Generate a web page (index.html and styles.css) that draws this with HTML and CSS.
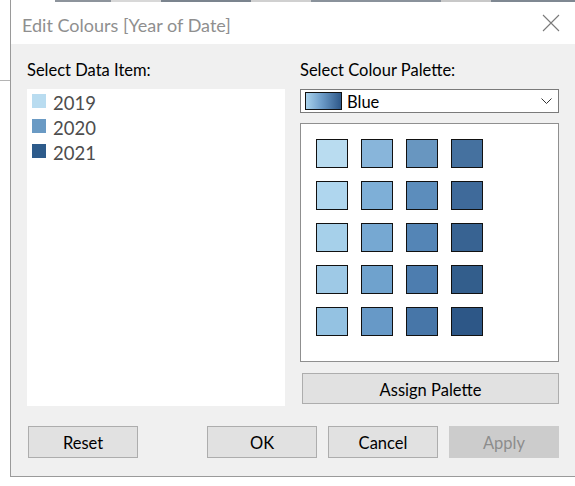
FILE: index.html
```html
<!DOCTYPE html>
<html>
<head>
<meta charset="utf-8">
<link rel="stylesheet" href="styles.css">
</head>
<body>
<div class="page">
  <div class="backdrop-left"><div class="backdrop-line"></div></div>
  <div class="dialog">
    <div class="titlebar">
      <div class="top-strip"></div>
      <div class="title-row">
        <span class="title">Edit Colours [Year of Date]</span>
        <svg class="close" width="18" height="18" viewBox="0 0 18 18">
          <path d="M1 1 L17 17 M17 1 L1 17" stroke="#7a7a7a" stroke-width="1.1" fill="none"/>
        </svg>
      </div>
    </div>
    <div class="content">
      <div class="columns">
        <div class="label">Select Data Item:</div>
        <div class="label">Select Colour Palette:</div>
        <div class="listbox">
          <div class="item"><span class="chip c2019"></span><span class="year">2019</span></div>
          <div class="item"><span class="chip c2020"></span><span class="year">2020</span></div>
          <div class="item"><span class="chip c2021"></span><span class="year">2021</span></div>
        </div>
        <div class="right">
          <div class="dropdown">
            <span class="gradient"></span>
            <span class="dd-text">Blue</span>
            <svg class="chev" width="11" height="6" viewBox="0 0 11 6">
              <path d="M0.5 0.5 L5.5 5.5 L10.5 0.5" stroke="#333" stroke-width="1" fill="none"/>
            </svg>
          </div>
          <div class="palette">
            <div class="grid">
              <span class="sw" style="background:#b9dcf0"></span>
              <span class="sw" style="background:#88b5da"></span>
              <span class="sw" style="background:#6896c0"></span>
              <span class="sw" style="background:#45719f"></span>
              <span class="sw" style="background:#afd6ee"></span>
              <span class="sw" style="background:#7eafd7"></span>
              <span class="sw" style="background:#5c8dbc"></span>
              <span class="sw" style="background:#3f6a9a"></span>
              <span class="sw" style="background:#a6d0ea"></span>
              <span class="sw" style="background:#76a8d2"></span>
              <span class="sw" style="background:#5485b6"></span>
              <span class="sw" style="background:#386392"></span>
              <span class="sw" style="background:#9ec9e6"></span>
              <span class="sw" style="background:#6fa2cd"></span>
              <span class="sw" style="background:#4d7daf"></span>
              <span class="sw" style="background:#335e8c"></span>
              <span class="sw" style="background:#94c2e2"></span>
              <span class="sw" style="background:#6799c7"></span>
              <span class="sw" style="background:#4776a8"></span>
              <span class="sw" style="background:#2d5787"></span>
            </div>
          </div>
          <div class="btn assign">Assign Palette</div>
        </div>
      </div>
      <div class="footer">
        <div class="btn reset">Reset</div>
        <div class="btn-group">
          <div class="btn">OK</div>
          <div class="btn">Cancel</div>
          <div class="btn disabled">Apply</div>
        </div>
      </div>
    </div>
  </div>
</div>
</body>
</html>
```
FILE: styles.css
```css
html, body {
  margin: 0;
  padding: 0;
  background: #ffffff;
}
body {
  font-family: Lato, "Liberation Sans", sans-serif;
  width: 575px;
  height: 486px;
  overflow: hidden;
}
.page {
  display: flex;
  align-items: flex-start;
}
.backdrop-left {
  width: 10px;
  flex: none;
}
.backdrop-line {
  margin-top: 80px;
  height: 1px;
  background: #b4b4b4;
}
.dialog {
  width: 564px;
  border-left: 1px solid #9a9a9a;
  border-bottom: 1px solid #9a9a9a;
  display: flex;
  flex-direction: column;
}
.titlebar {
  background: #ffffff;
  height: 44px;
}
.top-strip {
  height: 2px;
  background: linear-gradient(to right,
    #ffffff 0, #ffffff 44px,
    #8d949c 44px, #8d949c 100px,
    #d8d8d8 100px, #d8d8d8 150px,
    #7b848e 150px, #7b848e 240px,
    #d0d0d0 240px, #d0d0d0 300px,
    #8a929b 300px, #8a929b 430px,
    #c8c8c8 430px, #c8c8c8 480px,
    #7f8892 480px, #7f8892 564px);
}
.title-row {
  display: flex;
  align-items: flex-start;
  justify-content: space-between;
  padding: 0 15px 0 11px;
}
.title {
  font-size: 18px;
  line-height: 20px;
  color: #8f8f8f;
  margin-top: 13px;
}
.close {
  margin-top: 12px;
}
.content {
  background: #f0f0f0;
  padding: 16px 16px 18px 16px;
  height: 398px;
}
.columns {
  display: grid;
  grid-template-columns: 258px 259px;
  column-gap: 15px;
  row-gap: 9px;
}
.label {
  font-size: 16.5px;
  line-height: 20px;
  color: #000;
}
.listbox {
  background: #ffffff;
  height: 312px;
  padding: 5px 0 0 5px;
}
.item {
  display: flex;
  align-items: flex-start;
  height: 25px;
}
.chip {
  width: 14px;
  height: 14px;
  margin-right: 7px;
  flex: none;
}
.c2019 { background: #b9dcf0; }
.c2020 { background: #6a9ac4; }
.c2021 { background: #2d5b8b; }
.year {
  font-size: 18.5px;
  line-height: 18px;
  color: #4d4d4d;
}
.right {
  display: flex;
  flex-direction: column;
}
.dropdown {
  height: 22px;
  border: 1px solid #7a7a7a;
  background: #ffffff;
  display: flex;
  align-items: center;
  padding: 0 6px 0 4px;
}
.gradient {
  width: 35px;
  height: 16px;
  border: 1px solid #111;
  background: linear-gradient(to right, #a9d2ec, #6d9cc8 45%, #2e5889);
  margin-right: 5px;
  flex: none;
}
.dd-text {
  font-size: 16.5px;
  line-height: 20px;
  padding-top: 2px;
  flex: 1;
}
.chev {
  flex: none;
}
.palette {
  margin-top: 10px;
  border: 1px solid #8f8f8f;
  background: #ffffff;
  padding: 15px 0 0 15px;
  box-sizing: border-box;
  height: 239px;
}
.grid {
  display: grid;
  grid-template-columns: repeat(4, 32px);
  grid-auto-rows: 29px;
  column-gap: 13px;
  row-gap: 13px;
}
.sw {
  border: 1px solid #111;
  box-sizing: border-box;
}
.btn {
  box-sizing: border-box;
  height: 32px;
  width: 110px;
  border: 1px solid #adadad;
  background: #e1e1e1;
  display: flex;
  align-items: center;
  justify-content: center;
  padding-top: 2px;
  font-size: 16.5px;
  color: #000;
}
.assign {
  margin-top: 11px;
  width: 257px;
  height: 31px;
  margin-left: 2px;
}
.footer {
  margin-top: 20px;
  display: flex;
  justify-content: space-between;
}
.reset {
  margin-left: 1px;
}
.btn-group {
  display: flex;
  gap: 11px;
}
.disabled {
  background: #cccccc;
  border-color: #cccccc;
  color: #8c8c8c;
}
```
